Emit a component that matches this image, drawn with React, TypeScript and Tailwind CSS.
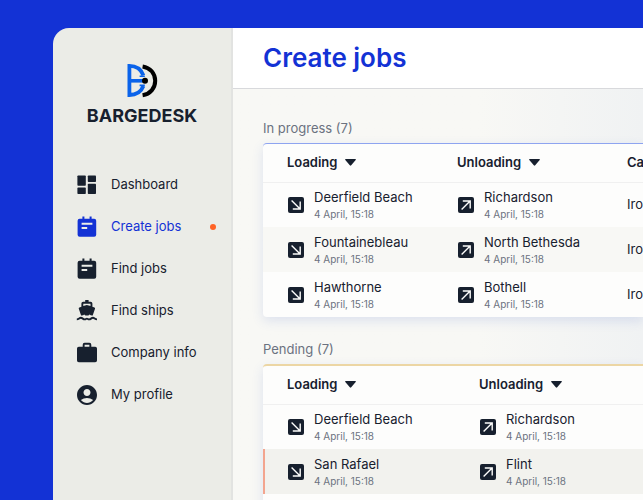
import React from "react";
import { MdAccountCircle } from "react-icons/md";

type Stop = { place: string; time: string };
type Job = { from: Stop; to: Stop; cargo?: string; alert?: boolean };

const TIME = "4 April, 15:18";
const stop = (place: string): Stop => ({ place, time: TIME });

const inProgress: Job[] = [
  { from: stop("Deerfield Beach"), to: stop("Richardson"), cargo: "Iron ore" },
  { from: stop("Fountainebleau"), to: stop("North Bethesda"), cargo: "Iron ore" },
  { from: stop("Hawthorne"), to: stop("Bothell"), cargo: "Iron ore" },
];

const pending: Job[] = [
  { from: stop("Deerfield Beach"), to: stop("Richardson") },
  { from: stop("San Rafael"), to: stop("Flint"), alert: true },
];

function Logo() {
  return (
    <svg width="31" height="35" viewBox="0 0 31 35" fill="none" aria-hidden="true">
      <path
        d="M16.4 12.4C14.2 6.6 9 2.9 2.4 2.9V32C9 32 14.2 28.6 16.4 23"
        stroke="#0a63ea"
        strokeWidth="3.8"
      />
      <path d="M12.6 13.2h5.2M12.6 22.4h5.2" stroke="#0a63ea" strokeWidth="1.6" />
      <path d="M2.4 17.8H18" stroke="#0a63ea" strokeWidth="3.6" />
      <path d="M15.6 3.4C23.2 4.6 28.2 10.4 28.2 17.8S23.2 31 15.6 32.2" stroke="#000" strokeWidth="4" />
      <circle cx="18" cy="17.8" r="3" fill="#000" />
    </svg>
  );
}

function NavIcon({ children }: { children: React.ReactNode }) {
  return (
    <svg width="24" height="24" viewBox="0 0 24 24" fill="currentColor" aria-hidden="true">
      {children}
    </svg>
  );
}

const dashboardIcon = (
  <NavIcon>
    <rect x="2.4" y="2.4" width="8.4" height="10.4" rx="0.8" />
    <rect x="12.8" y="2.4" width="8.2" height="6.6" rx="0.8" />
    <rect x="2.4" y="14.6" width="8.4" height="6.4" rx="0.8" />
    <rect x="12.8" y="10.8" width="8.2" height="10.2" rx="0.8" />
  </NavIcon>
);

const noteIcon = (
  <NavIcon>
    <path
      fillRule="evenodd"
      d="M7.4 1.6h2v2.2h5.2V1.6h2v2.2h2.6a2 2 0 0 1 2 2v14a2 2 0 0 1-2 2H4.6a2 2 0 0 1-2-2v-14a2 2 0 0 1 2-2h2.8zM6.6 7.8v2h10.8v-2zm0 4.1v2h5.6v-2z"
    />
  </NavIcon>
);

const shipIcon = (
  <NavIcon>
    <path
      fillRule="evenodd"
      d="M10.2 1h3.4v1.8h2a1.8 1.8 0 0 1 1.8 1.8v3.2l2 .7a1 1 0 0 1 .6 1.3l-2.3 6.6c-1.3.2-2.4-.2-3.1-1-.7.8-1.6 1.2-2.7 1.2s-2-.4-2.7-1.2c-.7.8-1.8 1.2-3.1 1L3.8 9.8a1 1 0 0 1 .6-1.3l2-.7V4.6a1.8 1.8 0 0 1 1.8-1.8h2zM8.3 4.7v2.4l3.6-1.2 3.6 1.2V4.7z"
    />
    <path
      d="M1.8 20.4c2 0 2.6-1.6 4-1.6 1.8 0 2.2 1.6 3.9 1.6 1.2 0 1.2-.8 2.2-.8s1 .8 2.2.8c1.7 0 2.1-1.6 3.9-1.6 1.4 0 2 1.6 4 1.6"
      fill="none"
      stroke="currentColor"
      strokeWidth="1.9"
    />
  </NavIcon>
);

const briefcaseIcon = (
  <NavIcon>
    <path
      fillRule="evenodd"
      d="M9.6 1.8h4.8a1.9 1.9 0 0 1 1.9 1.9v2h3.9A1.8 1.8 0 0 1 22 7.500v12a1.800 1.800 0 0 1-1.800 1.800H3.800A1.800 1.800 0 0 1 2 19.500v-12a1.800 1.800 0 0 1 1.800-1.800h3.900v-2a1.900 1.900 0 0 1 1.900-1.900zM9.600 3.700v2h4.800v-2z"
    />
  </NavIcon>
);

function ArrowBox({ up }: { up?: boolean }) {
  return (
    <svg width="16" height="16" viewBox="0 0 16 16" className="shrink-0" fill="none" aria-hidden="true">
      <rect width="16" height="16" rx="2" fill="#17202e" />
      <path
        d={up ? "M3.600 12.400l8-8M4.800 4h7.400v7.400" : "M3.600 3.600l8 8M12.200 4.600v7.400H4.800"}
        stroke="#fdfdfc"
        strokeWidth="1.4"
      />
    </svg>
  );
}

function SortHeader({ label }: { label: string }) {
  return (
    <button type="button" className="flex items-center gap-2 font-semibold whitespace-nowrap">
      {label}
      <svg width="11" height="7" viewBox="0 0 11 7" fill="currentColor" aria-hidden="true">
        <path d="M.8 0h9.400a.6.6 0 0 1 .5 1L6.200 6.200a.9.9 0 0 1-1.400 0L.3 1A.6.6 0 0 1 .8 0z" />
      </svg>
    </button>
  );
}

function StopCell({ stop, up }: { stop: Stop; up?: boolean }) {
  return (
    <div className="flex items-center gap-2.5 pl-px whitespace-nowrap">
      <ArrowBox up={up} />
      <div>
        <div className="leading-[18px]">{stop.place}</div>
        <div className="text-[10px] leading-4 text-[#6b7280]">{stop.time}</div>
      </div>
    </div>
  );
}

type TableProps = {
  title: string;
  jobs: Job[];
  border: string;
  column: string;
  cargo?: boolean;
};

function JobTable({ title, jobs, border, column, cargo }: TableProps) {
  return (
    <section>
      <h2 className="text-[13px] leading-5 text-[#6b7280]">{title}</h2>
      <div
        className={`mt-[5px] overflow-hidden rounded-l bg-[#fdfdfc] shadow-[0_4px_12px_rgba(60,90,200,0.14)] ${border}`}
      >
        <table className="w-full table-fixed border-collapse text-left text-[13px]">
          <thead>
            <tr className="h-[38px] border-b border-[#f0f0f0]">
              <th className={`pl-6 ${column}`}>
                <SortHeader label="Loading" />
              </th>
              <th className={`pl-6 ${column}`}>
                <SortHeader label="Unloading" />
              </th>
              <th className="pl-6">{cargo && <SortHeader label="Cargo" />}</th>
            </tr>
          </thead>
          <tbody>
            {jobs.map((job) => (
              <tr
                key={job.from.place}
                className={
                  job.alert
                    ? "h-[45px] bg-[#f2f2ee] shadow-[inset_2px_0_0_#f3a58f]"
                    : "h-[45px] even:bg-[#f8f8f5]"
                }
              >
                <td className="pl-6">
                  <StopCell stop={job.from} />
                </td>
                <td className="pl-6">
                  <StopCell stop={job.to} up />
                </td>
                <td className="pl-6 whitespace-nowrap">{job.cargo}</td>
              </tr>
            ))}
          </tbody>
        </table>
      </div>
    </section>
  );
}

const navItems = [
  { label: "Dashboard", icon: dashboardIcon },
  { label: "Create jobs", icon: noteIcon, active: true },
  { label: "Find jobs", icon: noteIcon },
  { label: "Find ships", icon: shipIcon },
  { label: "Company info", icon: briefcaseIcon },
  { label: "My profile", icon: <MdAccountCircle size={24} /> },
];

export default function App() {
  return (
    <div className="flex h-screen overflow-hidden bg-[#1332d5] pt-7 pl-[53px] font-['Inter','Liberation_Sans',sans-serif] text-[#17202e]">
      <aside className="w-[180px] shrink-0 rounded-tl-2xl border-r-2 border-[#e2e3e1] bg-[#ebece7] pt-[35px]">
        <div className="flex flex-col items-center">
          <Logo />
          <span className="mt-1.5 text-[18px] leading-6 font-bold">BARGEDESK</span>
        </div>
        <nav className="mt-9 pl-[22px]">
          {navItems.map(({ label, icon, active }) => (
            <a
              key={label}
              href="#"
              className={`flex h-[42px] items-center gap-3 pr-[15px] text-[13px] ${active ? "text-[#1332d5]" : ""}`}
            >
              {icon}
              <span className="flex-1">{label}</span>
              {active && <span className="size-1.5 rounded-full bg-[#ff6326]" />}
            </a>
          ))}
        </nav>
      </aside>
      <main className="min-w-0 flex-1 bg-linear-to-r from-[#f8f8f5] from-60% to-[#f0f2f3]">
        <header className="flex h-[61px] items-center border-b border-[#d8d9dc] bg-white pl-[30px]">
          <h1 className="text-[26px] leading-8 font-semibold text-[#1332d5]">Create jobs</h1>
        </header>
        <div className="flex flex-col gap-[22px] pt-[29px] pl-[30px]">
          <JobTable
            title="In progress (7)"
            jobs={inProgress}
            border="border-t border-[#8ea4f0]"
            column="w-[170px]"
            cargo
          />
          <JobTable
            title="Pending (7)"
            jobs={pending}
            border="border-t-2 border-[#ecd6a4] pb-10"
            column="w-[192px]"
          />
        </div>
      </main>
    </div>
  );
}
